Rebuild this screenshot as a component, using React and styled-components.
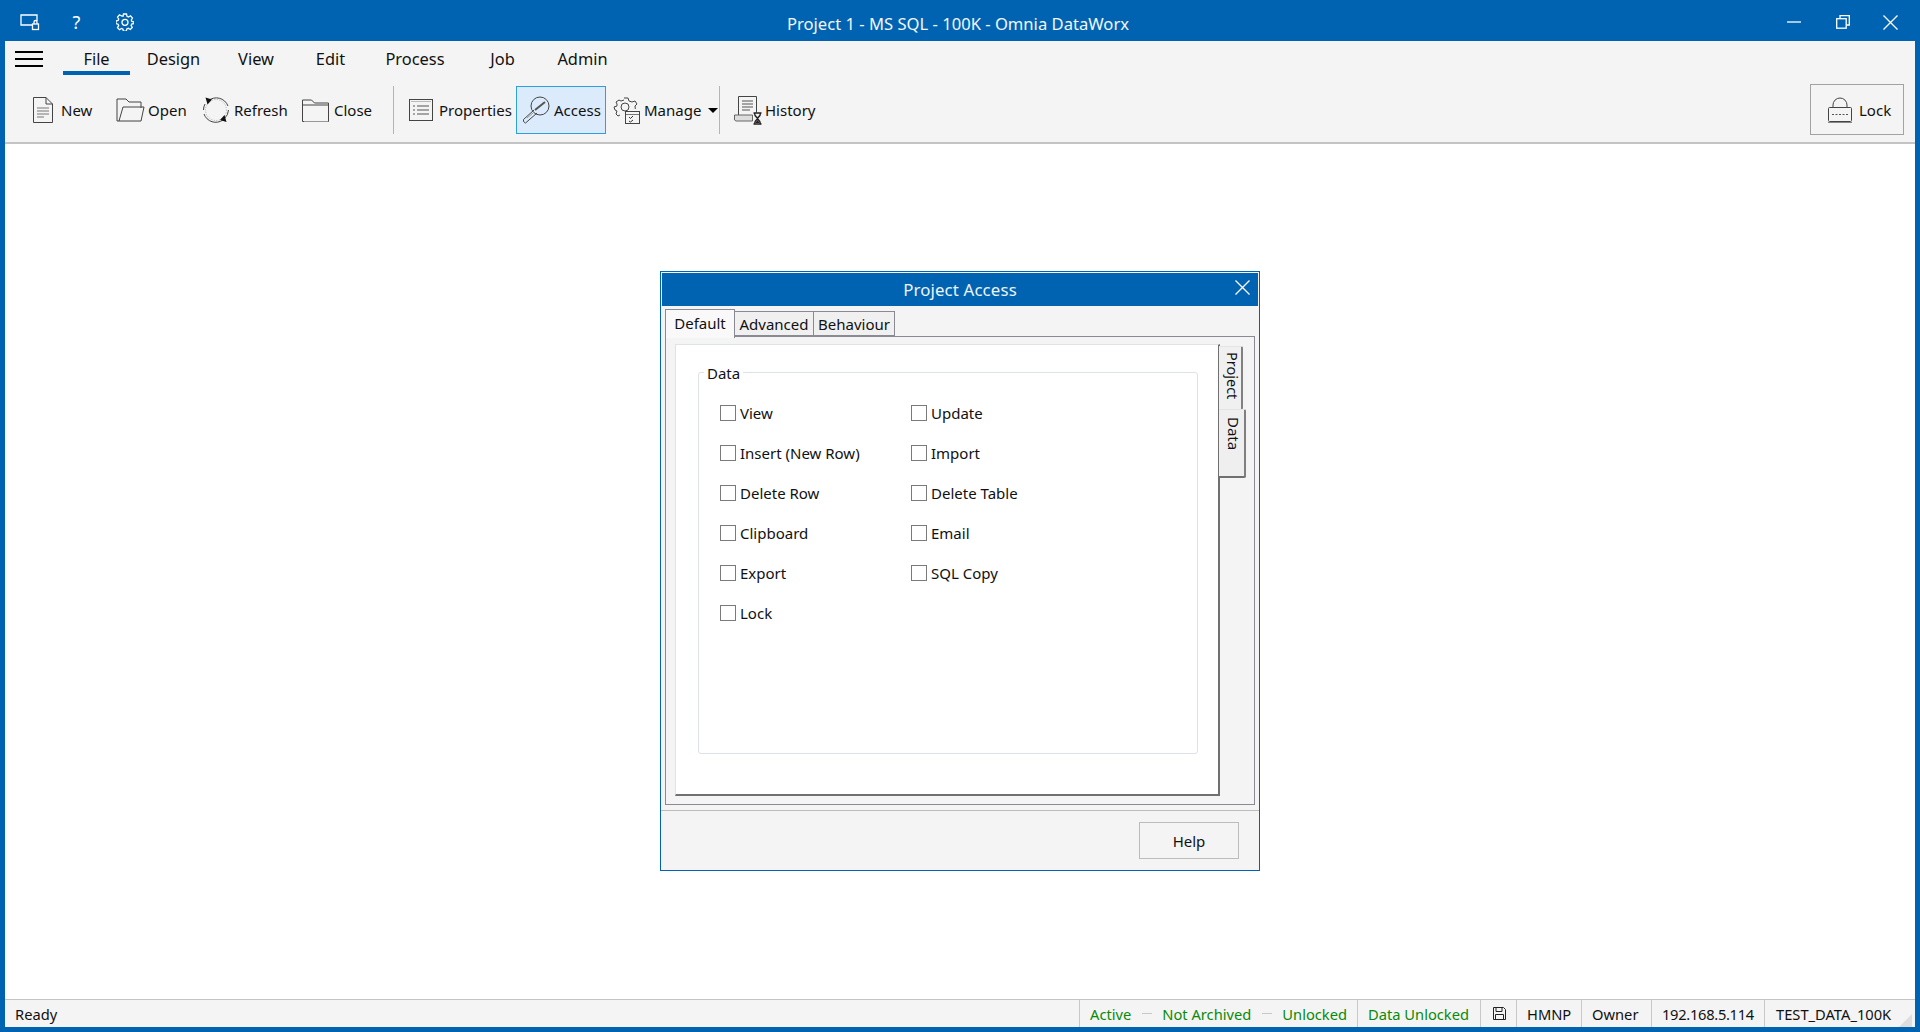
import React from "react";
import styled, { createGlobalStyle } from "styled-components";

const BLUE = "#0063b1";

const Global = createGlobalStyle`
  html, body, #root { margin: 0; padding: 0; height: 100%; }
  body { font-family: "Noto Sans", "Open Sans", sans-serif; color: #111; overflow: hidden; }
  * { box-sizing: border-box; }
`;

const Shell = styled.div`
  height: 100vh;
  display: flex;
  flex-direction: column;
  background: ${BLUE};
  padding: 0 5px 5px;
`;

const TitleBar = styled.div`
  height: 41px;
  flex: none;
  display: flex;
  align-items: center;
  justify-content: space-between;
  position: relative;
  color: #fff;
`;

const TitleText = styled.div`
  position: absolute;
  left: 0;
  right: 0;
  top: 13px;
  padding-right: 4px;
  text-align: center;
  font-size: 16.6px;
  line-height: 22px;
  color: #f2f6fb;
  pointer-events: none;
`;

const CaptionGroup = styled.div`
  display: flex;
  align-items: center;
  gap: ${(p) => p.$gap}px;
  padding: ${(p) => p.$pad};
`;

const HelpGlyph = styled.span`
  width: 33px;
  margin-left: 20px;
  text-align: center;
  font-size: 18px;
  line-height: 18px;
`;

const GearSlot = styled.span`
  display: flex;
  margin-left: 23px;
`;

const MinSlot = styled.span`
  display: flex;
  margin-right: 2px;
`;

const Ribbon = styled.div`
  flex: none;
  height: 103px;
  background: #f4f4f4;
  border-bottom: 2px solid #c4c4c4;
  display: flex;
  flex-direction: column;
`;

const MenuRow = styled.div`
  height: 34px;
  flex: none;
  display: flex;
  padding-left: 10px;
`;

const Burger = styled.div`
  width: 28px;
  height: 16px;
  margin: 10px 20px 0 0;
  border-top: 2px solid #000;
  border-bottom: 2px solid #000;
  position: relative;
  &::after {
    content: "";
    position: absolute;
    left: 0;
    right: 0;
    top: 5px;
    height: 2px;
    background: #000;
  }
`;

const MenuItem = styled.div`
  width: ${(p) => p.$w}px;
  height: 34px;
  line-height: 35px;
  text-align: center;
  font-size: 16.4px;
  border-bottom: 4px solid ${(p) => (p.$active ? BLUE : "transparent")};
`;

const ToolRow = styled.div`
  flex: 1;
  display: flex;
  align-items: flex-start;
  padding: 9px 11px 0 20px;
`;

const ToolItem = styled.div`
  width: ${(p) => p.$w}px;
  height: 48px;
  margin-top: 2px;
  padding-left: ${(p) => p.$pad ?? 7}px;
  display: flex;
  align-items: center;
  gap: ${(p) => p.$gap ?? 4}px;
  font-size: 15px;
  border: 1px solid ${(p) => (p.$on ? "#2c9fdf" : "transparent")};
  background: ${(p) => (p.$on ? "#dcebfc" : "transparent")};
  svg { flex: none; }
`;

const ToolSep = styled.div`
  width: 1px;
  height: 48px;
  margin: 2px ${(p) => p.$r}px 0 ${(p) => p.$l}px;
  background: #b4b4b4;
`;

const Caret = styled.span`
  width: 0;
  height: 0;
  margin-left: 3px;
  border-left: 5px solid transparent;
  border-right: 5px solid transparent;
  border-top: 5px solid #000;
`;

const LockButton = styled.div`
  margin-left: auto;
  width: 94px;
  height: 51px;
  display: flex;
  align-items: center;
  gap: 6px;
  padding-left: 16px;
  font-size: 15px;
  border: 1px solid #a2a2a2;
`;

const Workspace = styled.div`
  flex: 1;
  background: #fff;
  display: flex;
  align-items: center;
  justify-content: center;
`;

const Dialog = styled.div`
  width: 600px;
  height: 600px;
  margin-bottom: 2px;
  display: flex;
  flex-direction: column;
  background: #f4f4f4;
  border: 1px solid ${BLUE};
`;

const DialogTitle = styled.div`
  height: 33px;
  flex: none;
  margin: 1px 1px 0;
  background: ${BLUE};
  color: #eef3f9;
  font-size: 16.8px;
  letter-spacing: 0.15px;
  line-height: 34px;
  text-align: center;
  position: relative;
`;

const DialogClose = styled.div`
  position: absolute;
  right: 7px;
  top: 7px;
  width: 16px;
  height: 16px;
  display: flex;
`;

const TabStrip = styled.div`
  height: 31px;
  flex: none;
  display: flex;
  align-items: flex-end;
  padding-left: 4px;
  position: relative;
  z-index: 1;
  margin-bottom: -1px;
`;

const Tab = styled.div`
  width: ${(p) => p.$w}px;
  height: ${(p) => (p.$on ? 29 : 25)}px;
  margin-bottom: ${(p) => (p.$on ? -1 : 1)}px;
  text-align: center;
  font-size: 15px;
  line-height: ${(p) => (p.$on ? 26 : 25)}px;
  background: ${(p) => (p.$on ? "#f9f9f9" : "#f0f0f0")};
  border: 1px solid #8a8a94;
  border-bottom: ${(p) => (p.$on ? "none" : "1px solid #8a8a94")};
  border-left-width: ${(p) => (p.$on ? 1 : 0)}px;
`;

const TabBody = styled.div`
  height: 469px;
  flex: none;
  margin: 0 4px;
  padding: 7px 11px 8px 9px;
  border: 1px solid #8a8a94;
  display: flex;
`;

const Page = styled.div`
  width: 545px;
  height: 452px;
  flex: none;
  background: #fff;
  padding: 18px 20px 40px 22px;
  border-top: 1px solid #dfe3e7;
  border-left: 1px solid #dfe3e7;
  border-right: 2px solid #707070;
  border-bottom: 2px solid #707070;
  display: flex;
`;

const SideTabs = styled.div`
  display: flex;
  flex-direction: column;
  align-items: flex-start;
  margin-left: -1px;
`;

const SideTab = styled.div`
  writing-mode: vertical-rl;
  width: ${(p) => (p.$on ? 27 : 24)}px;
  height: ${(p) => (p.$on ? 69 : 64)}px;
  padding: ${(p) => (p.$on ? "7px 3px 0 0" : "5px 1px 0 0")};
  margin-top: ${(p) => (p.$on ? -1 : 2)}px;
  font-size: ${(p) => (p.$on ? 15 : 14.5)}px;
  line-height: 14px;
  background: ${(p) => (p.$on ? "#efefef" : "#f0f0f0")};
  border-right: 2px solid #808080;
  border-bottom: ${(p) => (p.$on ? "2px solid #707070" : "none")};
  border-top: 1px solid #e4e4e4;
  border-radius: 0 2px 2px 0;
`;

const GroupBox = styled.fieldset`
  flex: 1;
  margin: 0;
  padding: 10px 0 0 21px;
  border: 1px solid #dce2e8;
  border-radius: 3px;
  min-width: 0;
`;

const GroupLegend = styled.legend`
  margin-left: -16px;
  padding: 0 3px;
  font-size: 15px;
  line-height: 20px;
`;

const CheckGrid = styled.div`
  display: grid;
  grid-template-columns: 191px 1fr;
  grid-auto-rows: 40px;
`;

const CheckRow = styled.label`
  display: flex;
  align-items: center;
  gap: 4px;
  height: 40px;
  font-size: 15px;
`;

const Box = styled.input.attrs({ type: "checkbox" })`
  appearance: none;
  width: 16px;
  height: 16px;
  margin: 0;
  background: #fff;
  border: 1px solid #7a7a7a;
`;

const DialogFoot = styled.div`
  flex: 1;
  margin-top: 5px;
  border-top: 1px solid #bcbcbc;
  display: flex;
  justify-content: flex-end;
  padding: 11px 20px 0 0;
`;

const FootButton = styled.div`
  width: 100px;
  height: 37px;
  line-height: 36px;
  text-align: center;
  font-size: 15px;
  border: 1px solid #bcbcbc;
`;

const StatusBar = styled.div`
  height: 28px;
  flex: none;
  display: flex;
  align-items: stretch;
  background: #f4f4f4;
  border-top: 1px solid #c4c4c4;
  font-size: 14.7px;
  line-height: 28px;
  position: relative;
`;

const Ready = styled.div`
  flex: 1;
  padding-left: 10px;
`;

const Cell = styled.div`
  width: ${(p) => p.$w}px;
  flex: none;
  display: flex;
  align-items: center;
  padding-left: ${(p) => p.$pad ?? 10}px;
  border-left: 1px solid #c8c8c8;
  color: ${(p) => (p.$green ? "#0a8a0a" : "#111")};
  letter-spacing: ${(p) => p.$ls ?? 0}px;
  white-space: nowrap;
`;

const Dash = styled.span`
  width: 10px;
  height: 1px;
  margin: 0 10px 0 11px;
  background: #c8c8c8;
`;

const Grip = styled.div`
  position: absolute;
  right: 3px;
  bottom: 0;
  width: 0;
  height: 0;
  border-left: 13px solid transparent;
  border-bottom: 13px solid #dedede;
`;

const stroke = { fill: "none", stroke: "#444", strokeWidth: 1 };

const IconNew = () => (
  <svg width="20" height="26" viewBox="0 0 20 26">
    <path d="M.5.5H13L19.5 7v18.5H.5z" {...stroke} />
    <path d="M13 .5V7h6.5" {...stroke} />
    <path d="M4 11h12M4 14h12M4 17h12M4 20h7" stroke="#777" />
  </svg>
);
const IconOpen = () => (
  <svg width="29" height="26" viewBox="0 0 29 26">
    <path d="M1 8V2h9l3 3h12v6" {...stroke} />
    <path d="M1 8v16h24l3-14H7L3 24" {...stroke} />
    <path d="M2 24.5h22" stroke="#999" />
  </svg>
);
const IconRefresh = () => (
  <svg width="28" height="28" viewBox="0 0 28 28">
    <path d="M6 5A12.5 12.5 0 0 1 26 10M26.500 14a12.500 12.500 0 0 1-4 8.500M21 24A12.500 12.500 0 0 1 2 18M1.500 14A12.500 12.500 0 0 1 3 8" {...stroke} />
    <circle cx="14" cy="14" r="10.500" fill="none" stroke="#aaa" strokeDasharray="1 1.500" />
    <path d="M3.500 1.500l6.500 2-4.500 5zM24.500 26l-6.500-2 4.500-5z" fill="#111" />
  </svg>
);
const IconClose = () => (
  <svg width="28" height="25" viewBox="0 0 28 25">
    <path d="M.5 7V2h9l3 3h14v18.500H.5z" {...stroke} />
    <path d="M.5 7H26.500" {...stroke} />
    <path d="M2 23.500h24" stroke="#999" />
  </svg>
);
const IconProps = () => (
  <svg width="24" height="22" viewBox="0 0 24 22">
    <rect x=".5" y=".5" width="23" height="21" {...stroke} />
    <path d="M2 2.500h20" stroke="#bbb" />
    <path d="M4 7h2M4 11h2M4 15h2M8 7h12M8 11h12M8 15h12" stroke="#555" />
  </svg>
);
const IconKey = () => (
  <svg width="28" height="28" viewBox="0 0 28 28">
    <circle cx="18" cy="10" r="9" {...stroke} />
    <path d="M13 14l10-8" stroke="#555" strokeWidth="2" />
    <path d="M12 14L1.500 23.500v2l2 1.500L15 17" {...stroke} />
    <path d="M5 22l6-5" stroke="#999" />
  </svg>
);
const IconManage = () => (
  <svg width="27" height="27" viewBox="0 0 27 27">
    <path d="M11 1h4l1 3 3 1 3-1 2 3-2 2 .3 3M7 18l-2 1-2-2 1-3-2-1-1-3 3-1V7L3 5l3-2 2 1 3-1" {...stroke} />
    <circle cx="12" cy="10" r="4" {...stroke} />
    <rect x="12.500" y="14.500" width="14" height="12" fill="#f4f4f4" stroke="#444" />
    <path d="M13 17.500h13" stroke="#777" />
    <path d="M16 20l1.500 1.500L20 19M16 24l1.500 1 2.500-2" fill="none" stroke="#333" />
  </svg>
);
const IconHistory = () => (
  <svg width="29" height="29" viewBox="0 0 29 29">
    <path d="M4.500 19V.5h18v16" {...stroke} />
    <path d="M8 5h11M8 8h11M8 11h11M8 14h8" stroke="#555" />
    <path d="M.5 24v-5h18v6H2z" fill="#ddd" stroke="#666" />
    <path d="M19.500 17h8M19.500 28h8M20.500 17c0 4 3 4 3 5.500s-3 1.500-3 5.500M26.500 17c0 4-3 4-3 5.500s3 1.500 3 5.500" fill="none" stroke="#222" strokeWidth="1.400" />
    <path d="M21 27l2.500-3 2.500 3z" fill="#222" />
  </svg>
);
const IconLock = () => (
  <svg width="26" height="26" viewBox="0 0 26 26">
    <path d="M6 10V8a7 7 0 0 1 14 0v2" {...stroke} />
    <rect x="1.500" y="10.500" width="23" height="14" rx="1" {...stroke} />
    <path d="M5 17.500h16" stroke="#555" strokeDasharray="2 1.500" />
    <path d="M1 25.500h24" stroke="#888" />
  </svg>
);

const white = { fill: "none", stroke: "#fff", strokeWidth: 1.300 };

const IconScreenLock = () => (
  <svg width="20" height="18" viewBox="0 0 20 18">
    <path d="M12 12H1V2h16v6" {...white} />
    <rect x="12.500" y="11" width="6" height="5.500" {...white} />
    <path d="M14 11V9a1.500 1.500 0 0 1 3 0v2" {...white} />
  </svg>
);
const IconGear = () => (
  <svg width="18" height="18" viewBox="0 0 18 18">
    <path d="M7.500 1h3l.5 2.300 1.500.7 2-1.200 2 2.200-1.200 2 .6 1.500L18 9v1.500l-2.300.5-.6 1.500 1.200 2-2 2-2-1.200-1.500.6-.5 2.300h-3L7 16.100l-1.500-.6-2 1.200-2-2 1.200-2-.6-1.500L0 10.500V8l2.100-.5.6-1.500-1.200-2 2-2.200 2 1.200L7 3.300z" {...white} />
    <circle cx="9" cy="9.300" r="3" {...white} />
  </svg>
);
const IconMin = () => (
  <svg width="14" height="2" viewBox="0 0 14 2"><path d="M0 1h14" {...white} /></svg>
);
const IconRestore = () => (
  <svg width="14" height="14" viewBox="0 0 14 14">
    <rect x=".7" y="3.700" width="9.500" height="9.500" {...white} />
    <path d="M4 3.500V.7h9.300V10H10.500" {...white} />
  </svg>
);
const IconX = ({ size = 15 }) => (
  <svg width={size} height={size} viewBox="0 0 15 15"><path d="M.5.5l14 14M14.500.5l-14 14" {...white} /></svg>
);
const IconFloppy = () => (
  <svg width="13" height="13" viewBox="0 0 13 13">
    <path d="M.5.500h10l2 2v10H.5z" fill="none" stroke="#222" />
    <path d="M3 1v3.500h6V1M2.500 12V7.500h8V12" fill="none" stroke="#222" />
  </svg>
);

const menus = [
  ["File", 67, true],
  ["Design", 87],
  ["View", 78],
  ["Edit", 71],
  ["Process", 98],
  ["Job", 77],
  ["Admin", 83],
];

const checks = [
  "View", "Update",
  "Insert (New Row)", "Import",
  "Delete Row", "Delete Table",
  "Clipboard", "Email",
  "Export", "SQL Copy",
  "Lock",
];

export default function App() {
  return (
    <Shell>
      <Global />
      <TitleBar>
        <TitleText>Project 1 - MS SQL - 100K - Omnia DataWorx</TitleText>
        <CaptionGroup $gap={0} $pad="3px 0 0 15px">
          <IconScreenLock />
          <HelpGlyph>?</HelpGlyph>
          <GearSlot><IconGear /></GearSlot>
        </CaptionGroup>
        <CaptionGroup $gap={33} $pad="3px 17px 0 0">
          <MinSlot><IconMin /></MinSlot>
          <IconRestore />
          <IconX />
        </CaptionGroup>
      </TitleBar>

      <Ribbon>
        <MenuRow>
          <Burger />
          {menus.map(([label, w, active]) => (
            <MenuItem key={label} $w={w} $active={active}>{label}</MenuItem>
          ))}
        </MenuRow>
        <ToolRow>
          <ToolItem $w={83} $gap={8}><IconNew />New</ToolItem>
          <ToolItem $w={86} $gap={3}><IconOpen />Open</ToolItem>
          <ToolItem $w={100}><IconRefresh />Refresh</ToolItem>
          <ToolItem $w={86}><IconClose />Close</ToolItem>
          <ToolSep $l={13} $r={7} />
          <ToolItem $w={115} $gap={6}><IconProps />Properties</ToolItem>
          <ToolItem $w={90} $on $pad={5}><IconKey />Access</ToolItem>
          <ToolItem $w={113} $pad={6}><IconManage />Manage<Caret /></ToolItem>
          <ToolSep $l={0} $r={7} />
          <ToolItem $w={100} $gap={2} $pad={6}><IconHistory />History</ToolItem>
          <LockButton><IconLock />Lock</LockButton>
        </ToolRow>
      </Ribbon>

      <Workspace>
        <Dialog>
          <DialogTitle>
            Project Access
            <DialogClose><IconX /></DialogClose>
          </DialogTitle>
          <TabStrip>
            <Tab $w={70} $on>Default</Tab>
            <Tab $w={79}>Advanced</Tab>
            <Tab $w={81}>Behaviour</Tab>
          </TabStrip>
          <TabBody>
            <Page>
              <GroupBox>
                <GroupLegend>Data</GroupLegend>
                <CheckGrid>
                  {checks.map((c) => (
                    <CheckRow key={c}><Box />{c}</CheckRow>
                  ))}
                </CheckGrid>
              </GroupBox>
            </Page>
            <SideTabs>
              <SideTab>Project</SideTab>
              <SideTab $on>Data</SideTab>
            </SideTabs>
          </TabBody>
          <DialogFoot>
            <FootButton>Help</FootButton>
          </DialogFoot>
        </Dialog>
      </Workspace>

      <StatusBar>
        <Ready>Ready</Ready>
        <Cell $w={278} $green>Active<Dash />Not Archived<Dash />Unlocked</Cell>
        <Cell $w={123} $green>Data Unlocked</Cell>
        <Cell $w={36} $pad={12}><IconFloppy /></Cell>
        <Cell $w={65}>HMNP</Cell>
        <Cell $w={70}>Owner</Cell>
        <Cell $w={113} $ls={-0.3}>192.168.5.114</Cell>
        <Cell $w={151} $pad={11}>TEST_DATA_100K</Cell>
        <Grip />
      </StatusBar>
    </Shell>
  );
}
